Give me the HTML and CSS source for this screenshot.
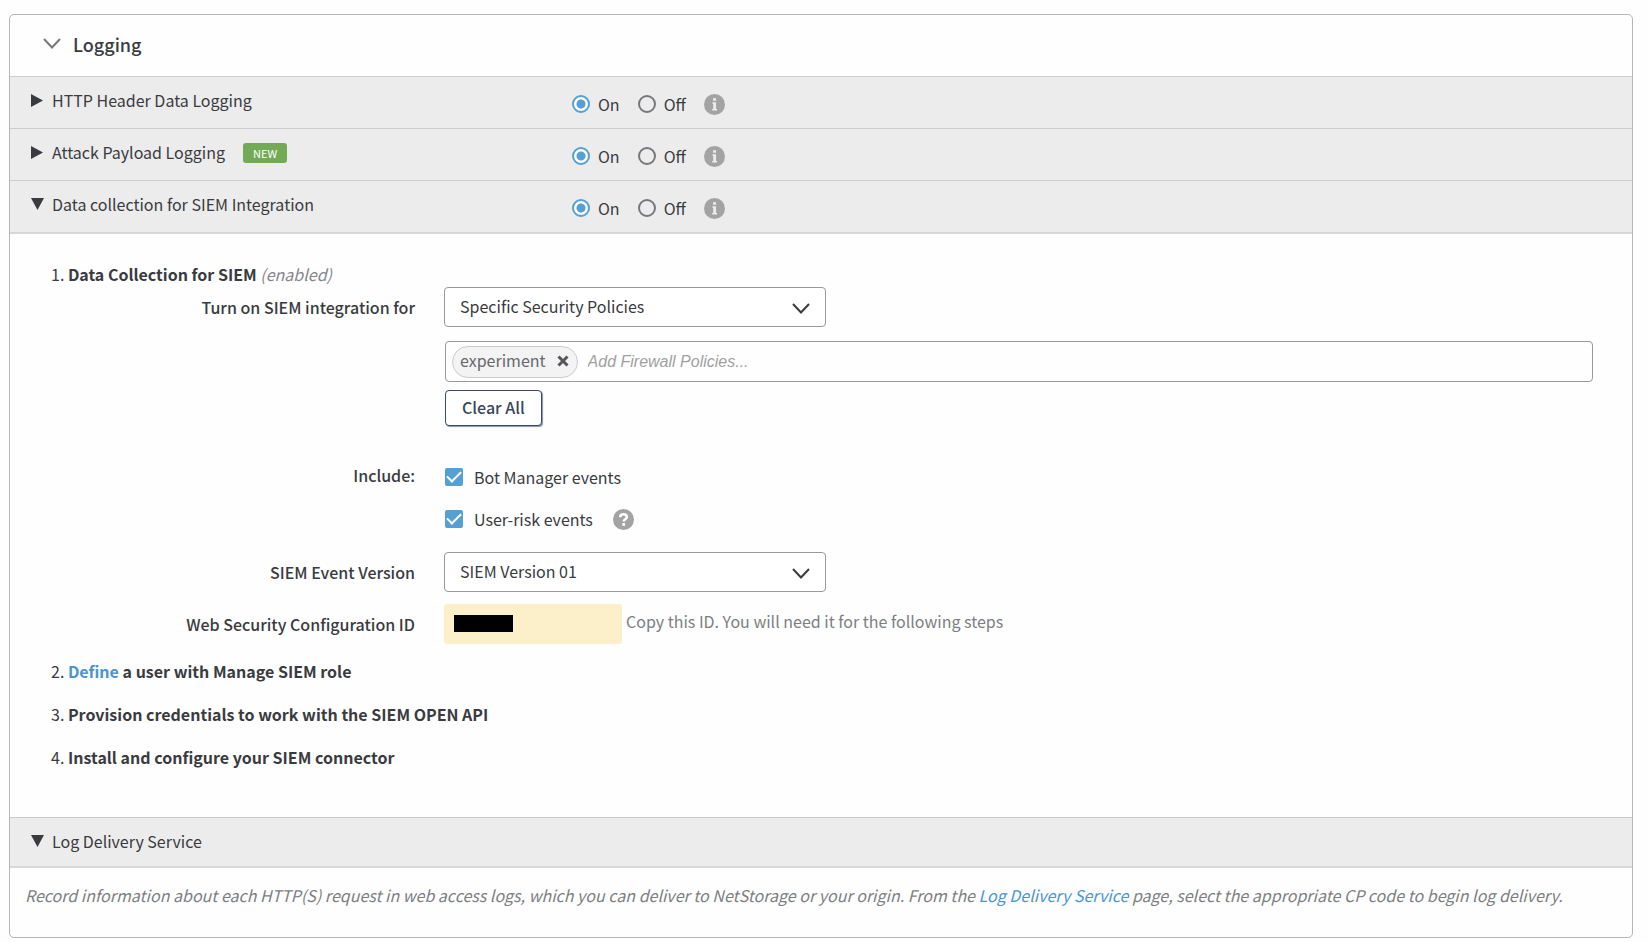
FILE: index.html
```html
<!DOCTYPE html>
<html lang="en">
<head>
<meta charset="utf-8">
<title>Logging</title>
<link rel="stylesheet" href="styles.css">
</head>
<body>
<svg class="sprite" aria-hidden="true">
  <symbol id="info" viewBox="0 0 20 20"><circle cx="10" cy="10" r="10" fill="#a3a3a3"/><path d="M8.600 4h2.900v2.500H8.600zM8 7.900h3.500v6.300h1v1.500H7.800v-1.500h1V9.400H8z" fill="#ececec"/></symbol>
  <symbol id="help" viewBox="0 0 20 20"><circle cx="10" cy="10" r="10" fill="#a3a3a3"/><path d="M6.800 7.900C6.800 5.900 8.100 4.900 10 4.900s3.200 1 3.200 2.700c0 2.100-3 2.200-3 4.300" fill="none" stroke="#fff" stroke-width="2.400"/><path d="M8.900 13.400h2.600v2.600H8.900z" fill="#fff"/></symbol>
  <symbol id="right" viewBox="0 0 13 13"><path d="M0 0l12 6.500L0 13z" fill="#3a3b40"/></symbol>
  <symbol id="down" viewBox="0 0 13 13"><path d="M0 0h13L6.500 12z" fill="#3a3b40"/></symbol>
  <symbol id="chevron" viewBox="0 0 18 11"><path d="M1 1l8 8.500L17 1" fill="none" stroke="currentColor" stroke-width="2"/></symbol>
</svg>
<main class="panel">
  <header class="panel-head">
    <svg class="head-chevron"><use href="#chevron"/></svg>
    <h1 class="title">Logging</h1>
  </header>

  <section class="row">
    <h2 class="row-title"><svg class="arrow"><use href="#right"/></svg>HTTP Header Data Logging</h2>
    <div class="switch">
      <label class="option"><input class="radio" type="radio" name="header" checked>On</label>
      <label class="option"><input class="radio" type="radio" name="header">Off</label>
      <svg class="hint"><use href="#info"/></svg>
    </div>
  </section>
  <section class="row">
    <h2 class="row-title"><svg class="arrow"><use href="#right"/></svg>Attack Payload Logging<span class="badge">NEW</span></h2>
    <div class="switch">
      <label class="option"><input class="radio" type="radio" name="payload" checked>On</label>
      <label class="option"><input class="radio" type="radio" name="payload">Off</label>
      <svg class="hint"><use href="#info"/></svg>
    </div>
  </section>
  <section class="row">
    <h2 class="row-title"><svg class="arrow"><use href="#down"/></svg>Data collection for SIEM Integration</h2>
    <div class="switch">
      <label class="option"><input class="radio" type="radio" name="siem" checked>On</label>
      <label class="option"><input class="radio" type="radio" name="siem">Off</label>
      <svg class="hint"><use href="#info"/></svg>
    </div>
  </section>

  <ol class="steps">
    <li class="step">
      <div class="step-line">1. <b>Data Collection for SIEM</b> <em class="muted">(enabled)</em></div>
      <form class="form">
        <label class="name" for="scope">Turn on SIEM integration for</label>
        <div class="field policies">
          <div class="select-box">
            <select class="select" id="scope"><option>Specific Security Policies</option></select>
            <svg class="select-chevron"><use href="#chevron"/></svg>
          </div>
          <div class="tags">
            <span class="tag">experiment
              <button class="tag-remove" type="button" aria-label="Remove experiment"><svg class="cross" viewBox="0 0 12 12"><path d="M1.500 1.500l9 9M10.500 1.500l-9 9" stroke="#55565a" stroke-width="3"/></svg></button>
            </span>
            <input class="tag-input" type="text" placeholder="Add Firewall Policies..." aria-label="Add Firewall Policies">
          </div>
          <button class="clear" type="button">Clear All</button>
        </div>

        <span class="name name-include">Include:</span>
        <div class="field includes">
          <label class="check-line"><input class="check" type="checkbox" checked>Bot Manager events</label>
          <div class="check-row">
            <label class="check-line"><input class="check" type="checkbox" checked>User-risk events</label>
            <svg class="hint"><use href="#help"/></svg>
          </div>
        </div>

        <label class="name" for="version">SIEM Event Version</label>
        <div class="field version">
          <div class="select-box">
            <select class="select" id="version"><option>SIEM Version 01</option></select>
            <svg class="select-chevron"><use href="#chevron"/></svg>
          </div>
        </div>

        <label class="name" for="config">Web Security Configuration ID</label>
        <div class="field config">
          <output class="config-id" id="config"><span class="redacted"></span></output>
          <span class="note">Copy this ID. You will need it for the following steps</span>
        </div>
      </form>
    </li>
    <li class="step">2. <b><a class="link" href="#">Define</a> a user with Manage SIEM role</b></li>
    <li class="step">3. <b>Provision credentials to work with the SIEM OPEN API</b></li>
    <li class="step">4. <b>Install and configure your SIEM connector</b></li>
  </ol>

  <section class="row row-delivery">
    <h2 class="row-title"><svg class="arrow"><use href="#down"/></svg>Log Delivery Service</h2>
  </section>
  <p class="about">Record information about each HTTP(S) request in web access logs, which you can deliver to NetStorage or your origin. From the <a class="link" href="#">Log Delivery Service</a> page, select the appropriate CP code to begin log delivery.</p>
</main>
</body>
</html>
```
FILE: styles.css
```css
* { box-sizing: border-box; }

body {
  margin: 0;
  padding: 14px 16px 4px 9px;
  background: #fefefe;
  color: #3a3b40;
  font: 400 16px/24px "Noto Sans CJK SC", "Noto Sans", sans-serif;
}

.sprite { display: none; }
svg { display: block; flex: none; }
.link { color: #4a95cf; text-decoration: none; }

.panel {
  border: 1px solid #b5b5b5;
  border-radius: 5px;
  overflow: hidden;
}

.panel-head {
  display: flex;
  align-items: center;
  gap: 12px;
  height: 61px;
  padding: 0 33px 3px;
}
.head-chevron { width: 18px; height: 11px; margin-bottom: 2px; color: #77787b; }
.title { margin: 0; font-size: 18px; font-weight: 500; }

.row {
  display: grid;
  grid-template-columns: 541px 1fr;
  align-items: center;
  min-height: 52px;
  padding-left: 21px;
  background: #ececec;
  border-top: 1px solid #cbcbcb;
}
.row-title {
  display: flex;
  align-items: center;
  margin: 0;
  padding-bottom: 5px;
  font-size: 16px;
  font-weight: 400;
}
.arrow { width: 13px; height: 13px; margin-right: 8px; }
.badge {
  margin: 2px 0 0 18px;
  padding: 0 10px;
  border-radius: 3px;
  background: #74aa56;
  color: #fff;
  font-size: 11px;
  line-height: 20px;
}
.switch { display: flex; align-items: center; padding-top: 2px; }
.option { display: flex; align-items: center; gap: 8px; margin-right: 18px; }
.radio {
  appearance: none;
  width: 18px;
  height: 18px;
  margin: 0;
  border: 2px solid #77787b;
  border-radius: 50%;
}
.radio:checked {
  border-color: #569fd3;
  background: radial-gradient(circle, #569fd3 4px, #fff 5px);
}
.hint { width: 21px; height: 21px; }
.switch .hint { margin-top: 2px; }

.steps {
  display: flex;
  flex-direction: column;
  gap: 19px;
  margin: 0;
  padding: 28px 39px 48px 41px;
  list-style: none;
  border-top: 2px solid #d8d8d8;
}
.step b { font-weight: 700; }
.step:first-child { margin-bottom: -4px; }
.step-line { margin-bottom: 1px; }
.muted { color: #85868b; }

.form {
  display: grid;
  grid-template-columns: 364px 1fr;
  column-gap: 29px;
}
.name { padding-top: 8px; text-align: right; font-weight: 500; }
.name-include { margin-top: -2px; padding-top: 0; }
.policies { margin-bottom: 39px; }
.includes { display: flex; flex-direction: column; gap: 18px; margin-bottom: 21px; }
.version { margin-bottom: 12px; }

.select-box { display: grid; width: 382px; max-width: 100%; align-items: center; }
.select {
  grid-area: 1 / 1;
  appearance: none;
  width: 100%;
  height: 40px;
  padding: 0 40px 2px 15px;
  border: 1px solid #999;
  border-radius: 4px;
  background: #fff;
  color: inherit;
  font: inherit;
}
.select-chevron {
  grid-area: 1 / 1;
  justify-self: end;
  width: 18px;
  height: 11px;
  margin: 3px 16px 0 0;
  pointer-events: none;
}

.tags {
  display: flex;
  align-items: center;
  gap: 10px;
  height: 41px;
  margin: 14px 0 8px 1px;
  padding: 0 6px;
  border: 1px solid #999;
  border-radius: 4px;
}
.tag {
  display: flex;
  align-items: center;
  gap: 11px;
  height: 32px;
  padding: 0 8px 3px 7px;
  border: 1px solid #ccc;
  border-radius: 16px;
  background: #f3f3f3;
  color: #66676b;
}
.tag-remove { padding: 2px 0 0; border: 0; background: none; }
.cross { width: 12px; height: 12px; }
.tag-input {
  flex: 1;
  min-width: 0;
  padding: 0;
  border: 0;
  outline: 0;
  background: none;
  font: italic 16px/24px "Liberation Sans", sans-serif;
}
.tag-input::placeholder { color: #a0a0a0; }
.clear {
  display: block;
  height: 36px;
  margin-left: 1px;
  padding: 0 16px 2px;
  border: 1px solid #3b4a60;
  border-radius: 4px;
  background: #fff;
  box-shadow: 1px 1px 1px #8a939f;
  color: #38475c;
  font: inherit;
  font-weight: 500;
}

.check-row { display: flex; align-items: center; gap: 20px; }
.check-line { display: flex; align-items: center; gap: 11px; }
.check {
  appearance: none;
  display: grid;
  place-items: center;
  width: 18px;
  height: 18px;
  margin: 0 0 0 1px;
  border-radius: 2px;
  background: #569fd3;
}
.check:checked::before {
  content: "";
  width: 12px;
  height: 6px;
  margin-bottom: 4px;
  border: solid #fff;
  border-width: 0 0 2px 2px;
  rotate: -45deg;
}

.config { display: flex; gap: 4px; }
.config-id {
  display: flex;
  align-items: center;
  width: 178px;
  height: 40px;
  padding: 0 10px 2px;
  border-radius: 3px;
  background: #fbf0ca;
}
.redacted { width: 59px; height: 17px; background: #000; }
.note { padding-top: 5px; color: #7d7e82; }

.row-delivery { min-height: 49px; }
.row-delivery .row-title { padding-bottom: 2px; }
.about {
  margin: 0;
  padding: 15px 15px 30px;
  border-top: 2px solid #d8d8d8;
  color: #7d7e82;
  font-style: italic;
}
```
